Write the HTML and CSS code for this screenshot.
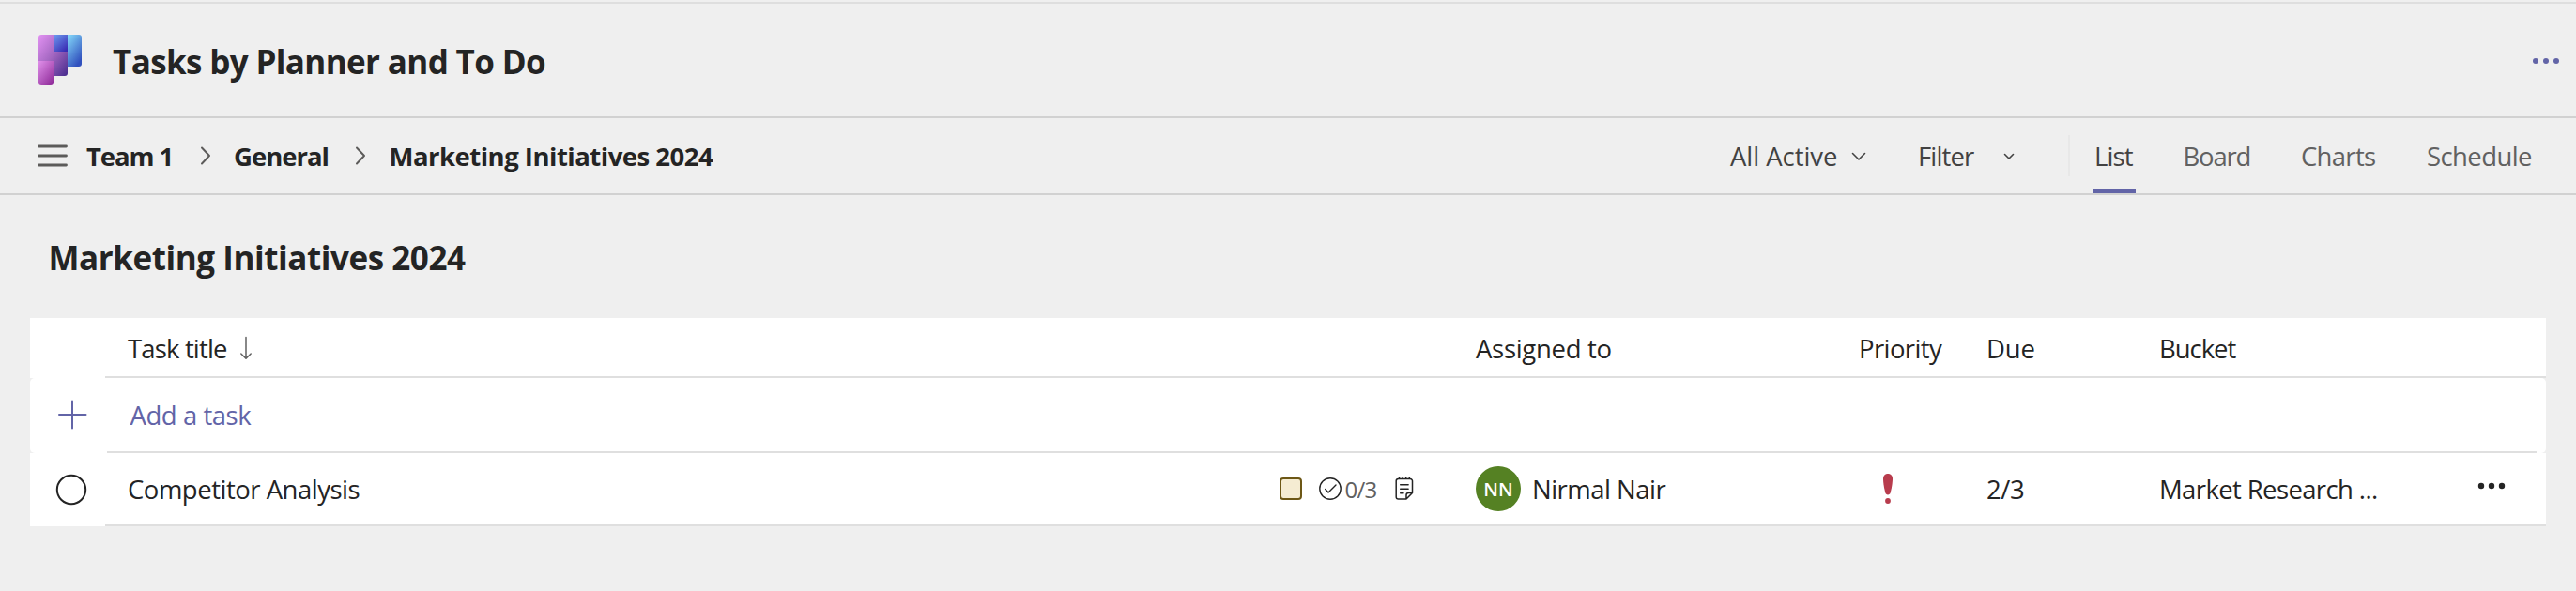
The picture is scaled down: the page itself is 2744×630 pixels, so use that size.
FILE: index.html
```html
<!DOCTYPE html>
<html lang="en">
<head>
<meta charset="utf-8">
<title>Tasks by Planner and To Do</title>
<link rel="stylesheet" href="styles.css">
</head>
<body>
<header class="app-header">
  <svg class="logo" width="46" height="54" viewBox="0 0 46 54">
    <defs>
      <linearGradient id="g1" x1="0" y1="0" x2="1" y2="1"><stop offset="0" stop-color="#e292f2"/><stop offset=".5" stop-color="#a266c0"/><stop offset="1" stop-color="#452a8c"/></linearGradient>
      <linearGradient id="g2" x1="0" y1="0" x2=".8" y2="1"><stop offset="0" stop-color="#e090ea"/><stop offset="1" stop-color="#922f9c"/></linearGradient>
      <linearGradient id="g3" x1="0" y1="0" x2=".8" y2="1"><stop offset="0" stop-color="#6d9cf0"/><stop offset="1" stop-color="#3a2cb4"/></linearGradient>
      <linearGradient id="g4" x1="0" y1="0" x2=".6" y2="1"><stop offset="0" stop-color="#86dcfb"/><stop offset="1" stop-color="#3151be"/></linearGradient>
    </defs>
    <path d="M31 0h12a3 3 0 0 1 3 3v28a3 3 0 0 1-3 3H31z" fill="url(#g4)"/>
    <path d="M3 0h28v41a3 3 0 0 1-3 3H0V3a3 3 0 0 1 3-3z" fill="url(#g1)"/>
    <path d="M16 0h15v18H16z" fill="url(#g3)"/>
    <path d="M0 28h16v23a3 3 0 0 1-3 3H3a3 3 0 0 1-3-3z" fill="url(#g2)"/>
  </svg>
  <h1 class="app-title">Tasks by Planner and To Do</h1>
  <svg class="app-more" width="28" height="8" viewBox="0 0 28 8" fill="#6264a7"><circle cx="3" cy="4" r="3"/><circle cx="14" cy="4" r="3"/><circle cx="25" cy="4" r="3"/></svg>
</header>

<nav class="toolbar">
  <svg class="menu-icon" width="32" height="24" viewBox="0 0 32 24" stroke="#5c5b5a" stroke-width="2.8" stroke-linecap="round"><path d="M1.5 2h29M1.5 12h29M1.5 22h29"/></svg>
  <span class="crumb crumb-team">Team 1</span>
  <svg class="crumb-sep" width="12" height="20" viewBox="0 0 12 20" fill="none" stroke="#5c5b5a" stroke-width="2" stroke-linecap="round" stroke-linejoin="round"><path d="M2 1.5l8 8.5-8 8.5"/></svg>
  <span class="crumb crumb-channel">General</span>
  <svg class="crumb-sep" width="12" height="20" viewBox="0 0 12 20" fill="none" stroke="#5c5b5a" stroke-width="2" stroke-linecap="round" stroke-linejoin="round"><path d="M2 1.5l8 8.5-8 8.5"/></svg>
  <span class="crumb crumb-plan">Marketing Initiatives 2024</span>
  <div class="tools">
    <span class="tool tool-view">All Active</span>
    <svg class="chev-view" width="16" height="10" viewBox="0 0 16 10" fill="none" stroke="#424242" stroke-width="1.6" stroke-linecap="round" stroke-linejoin="round"><path d="M1.500 1.500L8 8l6.500-6.500"/></svg>
    <span class="tool tool-filter">Filter</span>
    <svg class="chev-filter" width="12" height="8" viewBox="0 0 12 8" fill="none" stroke="#424242" stroke-width="1.600" stroke-linecap="round" stroke-linejoin="round"><path d="M1.500 1.500L6 6l4.500-4.500"/></svg>
    <span class="divider"></span>
    <span class="tab tab-list active">List</span>
    <span class="tab tab-board">Board</span>
    <span class="tab tab-charts">Charts</span>
    <span class="tab tab-schedule">Schedule</span>
  </div>
</nav>

<main>
  <h2 class="plan-title">Marketing Initiatives 2024</h2>
  <section class="table">
    <div class="row row-head">
      <div class="lead"></div>
      <div class="cells">
        <div class="cell cell-title"><span class="h-title">Task title</span>
          <svg class="sort" width="14" height="26" viewBox="0 0 14 26" fill="none" stroke="#616161" stroke-width="1.5" stroke-linecap="round" stroke-linejoin="round"><path d="M7 1.500v22.500M1.800 19L7 24.200 12.200 19"/></svg>
        </div>
        <div class="cell"><span class="h-assigned">Assigned to</span></div>
        <div class="cell"><span class="h-priority">Priority</span></div>
        <div class="cell"><span class="h-due">Due</span></div>
        <div class="cell"><span class="h-bucket">Bucket</span></div>
      </div>
    </div>
    <div class="row row-add">
      <div class="lead"><svg width="32" height="32" viewBox="0 0 32 32" stroke="#6264a7" stroke-width="2" stroke-linecap="round"><path d="M16 1.500v29M2 16h28.500"/></svg></div>
      <div class="cells"><span class="add-label">Add a task</span></div>
    </div>
    <div class="row row-task">
      <div class="lead"><svg width="34" height="34" viewBox="0 0 34 34" fill="none" stroke="#242424" stroke-width="2"><circle cx="17" cy="17" r="15.200"/></svg></div>
      <div class="cells">
        <div class="cell cell-title">
          <span class="task-name">Competitor Analysis</span>
          <span class="label-chip"></span>
          <svg class="check" width="24" height="24" viewBox="0 0 24 24" fill="none" stroke="#242424" stroke-width="1.400" stroke-linecap="round" stroke-linejoin="round"><circle cx="12" cy="12" r="11.200"/><path d="M6.700 12.500l3.300 3.400 8-8"/></svg>
          <span class="check-count">0/3</span>
          <svg class="note" width="20" height="26" viewBox="0 0 20 26" fill="none" stroke="#242424" stroke-width="1.500" stroke-linecap="round" stroke-linejoin="round"><path d="M12 24H3.500a2.300 2.300 0 0 1-2.300-2.300V4.800a2.300 2.300 0 0 1 2.300-2.300h12.700a2.300 2.300 0 0 1 2.300 2.300V17.500L12 24v-4.200a2.300 2.300 0 0 1 2.300-2.300h4.200M4.500 1v1.500M8.100 1v1.500M11.700 1v1.500M15.300 1v1.500M5.700 8.700h8.400M5.700 13.200h8.400M5.700 17.700h3.300"/></svg>
        </div>
        <div class="cell"><span class="avatar">NN</span><span class="person">Nirmal Nair</span></div>
        <div class="cell"><svg class="urgent" width="12" height="34" viewBox="0 0 12 34" fill="#b83c4d"><path d="M6 1c3.200 0 5 2.300 5 5.200 0 4.800-1.300 11.300-2.300 15-.4 1.400-1.300 2.200-2.700 2.200s-2.300-.8-2.700-2.200C2.300 17.500 1 11 1 6.200 1 3.300 2.800 1 6 1z"/><circle cx="6" cy="30" r="2.900"/></svg></div>
        <div class="cell"><span class="due">2/3</span></div>
        <div class="cell"><span class="bucket">Market Research ...</span>
          <svg class="row-more" width="30" height="8" viewBox="0 0 30 8" fill="#242424"><circle cx="4" cy="4" r="3.200"/><circle cx="15" cy="4" r="3.200"/><circle cx="26" cy="4" r="3.200"/></svg>
        </div>
      </div>
    </div>
  </section>
</main>
</body>
</html>
```

FILE: styles.css
```css
* { box-sizing: border-box; }

body {
  margin: 0;
  height: 630px;
  background: #efefef;
  color: #242424;
  font: 27.5px/38px "Open Sans", "Noto Sans", sans-serif;
  white-space: nowrap;
  overflow: hidden;
}

svg { display: block; flex: none; }
h1, h2 { margin: 0; font-size: 35px; line-height: 48px; font-weight: 700; }

/* App header */
.app-header {
  height: 124px;
  display: flex;
  align-items: center;
  margin-top: 2px;
  border-top: 2px solid #dedede;
  border-bottom: 2px solid #d1d1d1;
  padding: 0 18px 0 41px;
}
.app-title { margin: 4px 0 0 33px; letter-spacing: -0.638px; }
.app-more { margin: 2px 0 0 auto; }

/* Breadcrumb and view switcher */
.toolbar {
  height: 82px;
  display: flex;
  align-items: center;
  border-bottom: 2px solid #d1d1d1;
  padding-left: 40px;
}
.crumb { font-weight: 700; flex: none; padding-top: 2px; }
.menu-icon { margin-right: 20px; }
.crumb-team { width: 121px; letter-spacing: -1.086px; }
.crumb-sep { margin-right: 24px; }
.crumb-channel { width: 129px; letter-spacing: -1.013px; }
.crumb-plan { letter-spacing: -0.505px; }
.crumb-sep + .crumb-plan { margin-left: 0.5px; }

.tools { height: 82px; margin-left: auto; width: 901px; display: flex; align-items: center; color: #424242; padding-bottom: 2px; }
.tool, .tab { flex: none; }
.tool { padding-top: 4px; }
.tool-view { width: 129px; letter-spacing: -0.051px; }
.chev-view { margin: 3px 55px 0 0; }
.tool-filter { width: 91px; letter-spacing: -0.864px; }
.chev-filter { margin: 4px 57px 0 0; }
.divider { width: 2px; height: 44px; background: #e8e8e8; margin: 2px 24px 0 0; }
.tab { height: 82px; line-height: 83px; color: #616161; margin-bottom: -2px; }
.tab.active { color: #424242; border-bottom: 4px solid #6264a7; height: 81px; margin-top: -1px; }
.tab-list { width: 46px; padding-left: 2px; letter-spacing: -0.9px; margin-right: 50.5px; }
.tab-board { width: 125.5px; letter-spacing: -1.207px; }
.tab-charts { width: 134px; letter-spacing: -0.702px; }
.tab-schedule { letter-spacing: -0.599px; }

/* Plan */
.plan-title { padding: 43px 0 40px 51.5px; letter-spacing: -0.437px; }

.table { margin: 0 32px; }
.row { display: flex; background: #fff; }
.lead { width: 80px; flex: none; display: flex; align-items: center; }
.cells {
  flex: 1;
  display: grid;
  grid-template-columns: 1460px 408px 136px 184px 1fr;
  border-bottom: 2px solid #dfdfdf;
}
.cell { display: flex; align-items: center; min-width: 0; }
.cell-title { padding-left: 24px; }

.row-head { height: 64px; }
.row-head .cell { padding-top: 4px; }
.h-title { width: 119px; letter-spacing: -0.846px; }
.sort { margin-top: -2px; }
.h-assigned { letter-spacing: -0.305px; }
.h-priority { letter-spacing: -0.607px; }
.h-due { letter-spacing: -0.159px; }
.h-bucket { letter-spacing: -1.039px; }

.row-add { height: 80px; border-radius: 5px; }
.row-add .lead { width: 82px; padding: 0 0 2px 29px; }
.row-add .cells { display: flex; align-items: center; padding-left: 24.5px; margin-right: 10px; color: #6264a7; }
.add-label { letter-spacing: -0.45px; padding-top: 2px; }

.row-task { height: 78px; }
.row-task .lead { padding-left: 27px; }
.task-name { width: 1227px; letter-spacing: -0.492px; padding-top: 2px; }
.label-chip { width: 24px; height: 24px; border: 2px solid #6d5715; border-radius: 4px; background: #f5ecd2; margin-right: 18px; flex: none; }
.check-count { width: 53px; margin-left: 3.5px; padding-top: 2px; font-size: 24px; color: #616161; letter-spacing: -0.762px; }
.avatar { width: 48px; height: 48px; border-radius: 50%; background: #558123; color: #fff; font-size: 20px; font-weight: 600; line-height: 49px; text-align: center; margin-right: 12px; }
.person { letter-spacing: -0.514px; padding-top: 2px; }
.urgent { margin-left: 25px; }
.due { letter-spacing: -0.404px; padding-top: 2px; }
.bucket { letter-spacing: -0.622px; padding-top: 2px; }
.row-more { margin: 0 43px 6px auto; }
```
